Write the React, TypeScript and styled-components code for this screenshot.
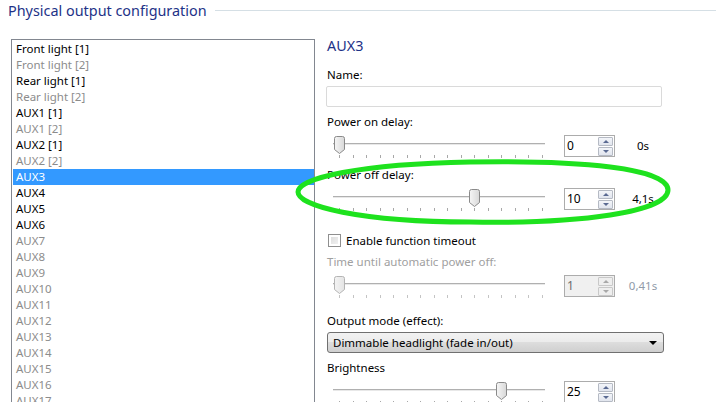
import React from "react";
import styled, { createGlobalStyle } from "styled-components";

const GlobalStyle = createGlobalStyle`
  html, body { margin: 0; padding: 0; background: #fff; }
  body { font-family: "Segoe UI", "Noto Sans", "Open Sans", sans-serif; font-size: 11.5px; color: #000; overflow: hidden; }
`;

const Page = styled.div`
  position: relative;
  width: 716px;
  height: 402px;
  overflow: hidden;
  background: #fff;
`;

const Header = styled.div`
  display: flex;
  align-items: center;
  height: 22px;
  padding-left: 8px;
`;

const Title = styled.div`
  font-size: 14.4px;
  line-height: 22px;
  color: #1e3287;
  white-space: nowrap;
`;

const Rule = styled.div`
  flex: 1;
  height: 1px;
  background: #d5dfe5;
  margin-left: 8px;
  margin-top: -1px;
`;

const Body = styled.div`
  display: flex;
  padding: 17px 0 0 11px;
`;

const ListBox = styled.div`
  width: 301px;
  height: 420px;
  border: 1px solid #828790;
  padding: 1px 0 0 1px;
  box-sizing: content-box;
`;

const ListItem = styled.div<{ $on: boolean; $sel?: boolean }>`
  height: 16px;
  line-height: 16px;
  padding-left: 3px;
  white-space: nowrap;
  background: ${(p) => (p.$sel ? "#3399ff" : "transparent")};
  color: ${(p) => (p.$sel ? "#fff" : p.$on ? "#000" : "#8c8c8c")};
`;

const Panel = styled.div`
  display: flex;
  flex-direction: column;
  margin-left: 12px;
  margin-top: -3px;
  width: 345px;
`;

const PanelTitle = styled.div`
  font-size: 14.4px;
  line-height: 20px;
  height: 20px;
  color: #1e3287;
`;

const Label = styled.div<{ $gap: number; $dim?: boolean }>`
  margin-top: ${(p) => p.$gap}px;
  height: 16px;
  line-height: 16px;
  white-space: nowrap;
  color: ${(p) => (p.$dim ? "#a0a0a0" : "#000")};
`;

const TextInput = styled.div`
  margin-top: 3px;
  margin-left: -1px;
  width: 336px;
  height: 21px;
  box-sizing: border-box;
  border: 1px solid #dadada;
  border-radius: 2px;
  background: #fff;
`;

const SliderRow = styled.div`
  display: flex;
  align-items: flex-start;
  margin-top: 5px;
  height: 22px;
`;

const Slider = styled.div`
  position: relative;
  width: 224px;
  height: 25px;
  flex: none;
`;

const Track = styled.div`
  margin-left: 6px;
  margin-top: 8px;
  width: 212px;
  height: 1px;
  border-top: 1px solid #b0b0b0;
  background: #e8e8e8;
`;

const Ticks = styled.div<{ $dim?: boolean }>`
  display: flex;
  justify-content: space-between;
  margin-left: 12px;
  margin-top: 10px;
  width: 204px;
  span {
    width: 1px;
    height: 3px;
    background: ${(p) => (p.$dim ? "#c4c4c4" : "#a8a8a8")};
  }
`;

const ThumbWrap = styled.div`
  position: absolute;
  top: 1px;
  width: 11px;
  height: 18px;
  line-height: 0;
`;

const Spin = styled.div<{ $dim?: boolean }>`
  display: flex;
  margin-left: 13px;
  width: 51px;
  height: 22px;
  box-sizing: border-box;
  border: 1px solid #acacac;
  background: ${(p) => (p.$dim ? "#f0f0f0" : "#fff")};
  flex: none;
`;

const SpinText = styled.div<{ $dim?: boolean }>`
  flex: 1;
  padding-left: 2px;
  line-height: 20px;
  font-size: 12px;
  color: ${(p) => (p.$dim ? "#6d6d6d" : "#000")};
`;

const SpinButtons = styled.div`
  display: flex;
  flex-direction: column;
  gap: 1px;
  padding: 1px 1px 0 0;
`;

const SpinBtn = styled.div<{ $dim?: boolean }>`
  width: 13px;
  height: 8px;
  border: 1px solid ${(p) => (p.$dim ? "#c8c8c8" : "#b5bac4")};
  border-radius: 1px;
  background: ${(p) => (p.$dim ? "#eeeeee" : "linear-gradient(#f3f5f9, #e1e5ee)")};
  display: flex;
  align-items: center;
  justify-content: center;
`;

const Arrow = styled.div<{ $down?: boolean; $dim?: boolean }>`
  width: 0;
  height: 0;
  border-left: 3px solid transparent;
  border-right: 3px solid transparent;
  ${(p) =>
    p.$down
      ? `border-top: 3px solid ${p.$dim ? "#a8a8a8" : "#5a6a92"};`
      : `border-bottom: 3px solid ${p.$dim ? "#a8a8a8" : "#5a6a92"};`}
`;

const ValueText = styled.div<{ $dim?: boolean }>`
  width: 46px;
  margin-left: 5px;
  text-align: center;
  line-height: 22px;
  white-space: nowrap;
  color: ${(p) => (p.$dim ? "#909aa8" : "#000")};
`;

const CheckRow = styled.div`
  display: flex;
  align-items: center;
  margin-top: 22px;
  height: 16px;
  margin-left: 1px;
`;

const CheckBox = styled.div`
  width: 13px;
  height: 13px;
  box-sizing: border-box;
  border: 1px solid #8f8f8f;
  background: linear-gradient(135deg, #d8d8d8, #f6f6f6);
  box-shadow: inset 0 0 0 2px #fff;
  margin-right: 5px;
`;

const Select = styled.div`
  position: relative;
  margin-top: 3px;
  width: 337px;
  height: 21px;
  box-sizing: border-box;
  border: 1px solid #707070;
  border-radius: 3px;
  background: linear-gradient(#f2f2f2 0%, #ebebeb 50%, #dddddd 50%, #cfcfcf 100%);
  padding-left: 5px;
  line-height: 19px;
  white-space: nowrap;
`;

const SelectArrow = styled.div`
  position: absolute;
  right: 6px;
  top: 8px;
  width: 0;
  height: 0;
  border-left: 4px solid transparent;
  border-right: 4px solid transparent;
  border-top: 4px solid #000;
`;

const Overlay = styled.svg`
  position: absolute;
  left: 0;
  top: 0;
  pointer-events: none;
`;

type Item = { t: string; on: boolean; sel?: boolean };
const items: Item[] = [
  { t: "Front light [1]", on: true },
  { t: "Front light [2]", on: false },
  { t: "Rear light [1]", on: true },
  { t: "Rear light [2]", on: false },
  { t: "AUX1 [1]", on: true },
  { t: "AUX1 [2]", on: false },
  { t: "AUX2 [1]", on: true },
  { t: "AUX2 [2]", on: false },
  { t: "AUX3", on: true, sel: true },
  { t: "AUX4", on: true },
  { t: "AUX5", on: true },
  { t: "AUX6", on: true },
  ...Array.from({ length: 11 }, (_, i) => ({ t: `AUX${i + 7}`, on: false })),
];

function Thumb({ frac, dim }: { frac: number; dim?: boolean }) {
  const left = 12 + frac * 203 - 5.5;
  return (
    <ThumbWrap style={{ left }}>
      <svg width="11" height="18" viewBox="0 0 11 18">
        <defs>
          <linearGradient id={dim ? "tgd" : "tg"} x1="0" y1="0" x2="1" y2="0">
            <stop offset="0" stopColor={dim ? "#f4f4f4" : "#f6f6f6"} />
            <stop offset="1" stopColor={dim ? "#e4e4e4" : "#d8d8d8"} />
          </linearGradient>
        </defs>
        <path
          d="M0.5 2.5 Q0.5 0.5 2.5 0.5 H8.5 Q10.5 0.5 10.5 2.5 V13.5 L5.5 17.5 L0.5 13.5 Z"
          fill={`url(#${dim ? "tgd" : "tg"})`}
          stroke={dim ? "#b4b4b4" : "#8a8a8a"}
        />
      </svg>
    </ThumbWrap>
  );
}

function SliderField({ frac, value, unit, dim }: { frac: number; value: string; unit?: string; dim?: boolean }) {
  return (
    <SliderRow>
      <Slider>
        <Track />
        <Ticks $dim={dim}>
          {Array.from({ length: 16 }, (_, i) => (
            <span key={i} />
          ))}
        </Ticks>
        <Thumb frac={frac} dim={dim} />
      </Slider>
      <Spin $dim={dim}>
        <SpinText $dim={dim}>{value}</SpinText>
        <SpinButtons>
          <SpinBtn $dim={dim}>
            <Arrow $dim={dim} />
          </SpinBtn>
          <SpinBtn $dim={dim}>
            <Arrow $down $dim={dim} />
          </SpinBtn>
        </SpinButtons>
      </Spin>
      {unit !== undefined && <ValueText $dim={dim}>{unit}</ValueText>}
    </SliderRow>
  );
}

export default function App() {
  return (
    <Page>
      <GlobalStyle />
      <Header>
        <Title>Physical output configuration</Title>
        <Rule />
      </Header>
      <Body>
        <ListBox>
          {items.map((it) => (
            <ListItem key={it.t} $on={it.on} $sel={it.sel}>
              {it.t}
            </ListItem>
          ))}
        </ListBox>
        <Panel>
          <PanelTitle>AUX3</PanelTitle>
          <Label $gap={11}>Name:</Label>
          <TextInput />
          <Label $gap={7}>Power on delay:</Label>
          <SliderField frac={0} value="0" unit="0s" />
          <Label $gap={10}>Power off delay:</Label>
          <SliderField frac={10 / 15} value="10" unit="4,1s" />
          <CheckRow>
            <CheckBox />
            Enable function timeout
          </CheckRow>
          <Label $gap={6} $dim>
            Time until automatic power off:
          </Label>
          <SliderField frac={0} value="1" unit="0,41s" dim />
          <Label $gap={16}>Output mode (effect):</Label>
          <Select>
            Dimmable headlight (fade in/out)
            <SelectArrow />
          </Select>
          <Label $gap={7}>Brightness</Label>
          <SliderField frac={0.8} value="25" />
        </Panel>
      </Body>
      <Overlay width="716" height="402" viewBox="0 0 716 402">
        <path
          d="M470 162 C580 160 668 168 668 190 C668 212 580 224 470 222 C360 222 298 206 298 192 C298 178 360 164 470 162 Z"
          fill="none"
          stroke="#1ee21e"
          strokeWidth="5"
        />
      </Overlay>
    </Page>
  );
}
